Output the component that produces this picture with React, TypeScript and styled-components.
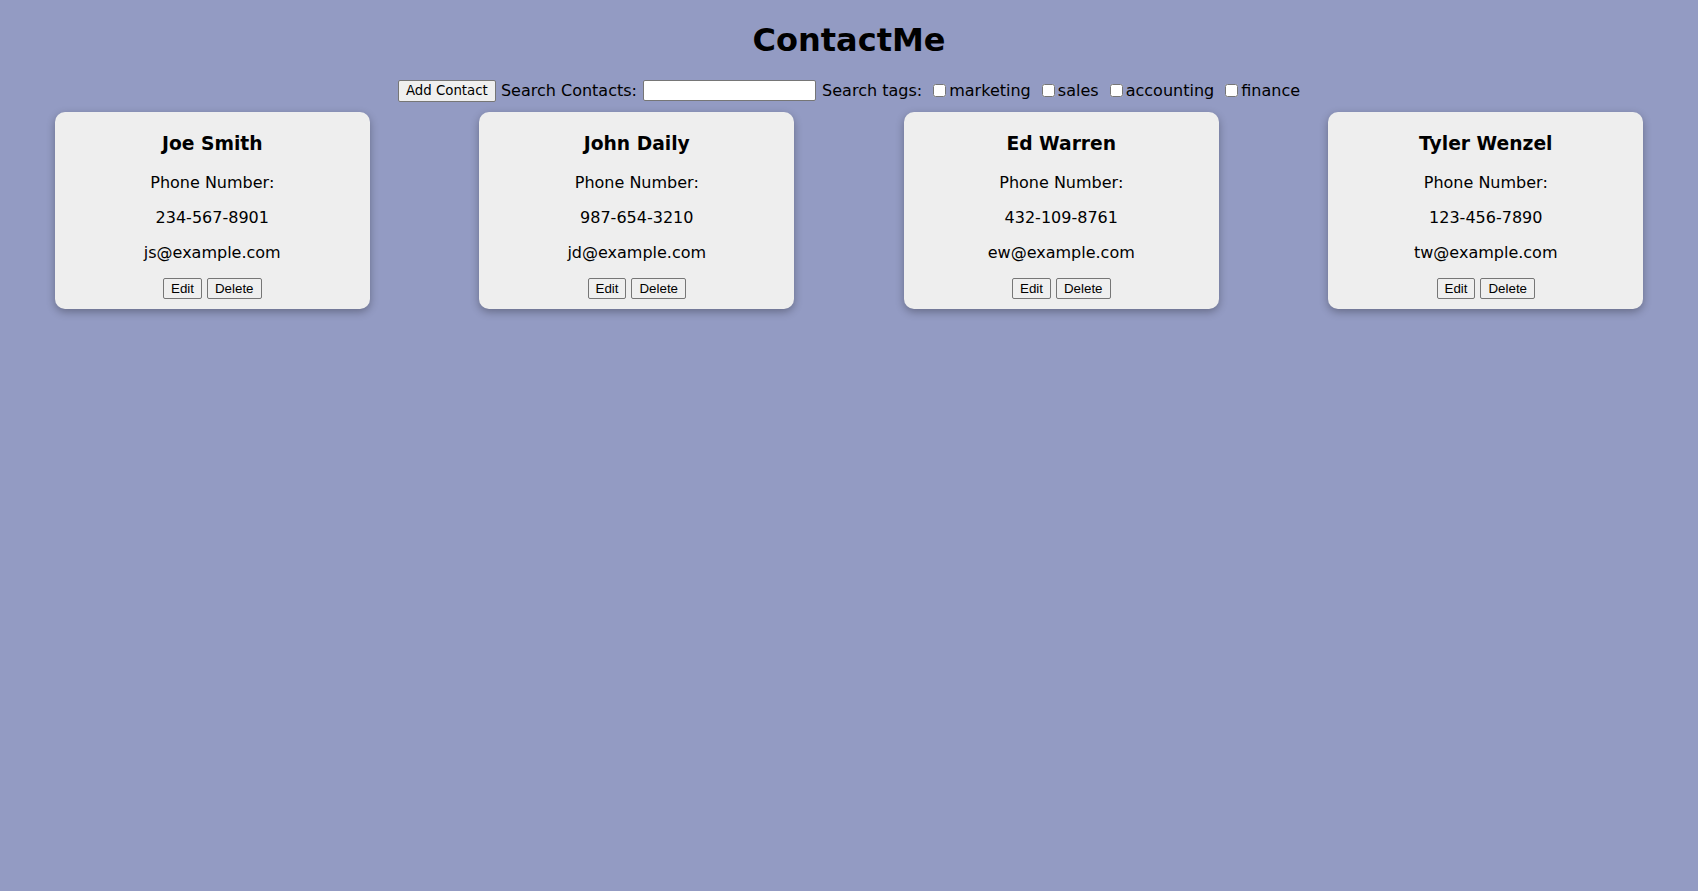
import React from "react";
import styled, { createGlobalStyle } from "styled-components";

const GlobalStyle = createGlobalStyle`
  html, body {
    margin: 0;
    padding: 0;
    background: #939bc3;
  }
  body {
    font-family: "DejaVu Sans", Verdana, sans-serif;
    font-size: 16px;
    color: #000;
  }
`;

const Page = styled.div`
  display: flex;
  flex-direction: column;
  min-height: 891px;
`;

const Title = styled.h1`
  margin: 21px 0 20.5px;
  font-size: 32px;
  font-weight: bold;
  text-align: center;
  line-height: normal;
`;

const Toolbar = styled.div`
  text-align: center;
  line-height: 22px;
  height: 22px;
`;

const AddButton = styled.button`
  font-family: "DejaVu Sans", Verdana, sans-serif;
  font-size: 13.33px;
  height: 22px;
  padding: 1px 7px;
  background: #efefef;
  border: 1px solid #767676;
  border-radius: 2px;
  color: #000;
  vertical-align: top;
  margin: 0;
`;

const SearchInput = styled.input`
  width: 173px;
  height: 21px;
  box-sizing: border-box;
  padding: 1px 2px;
  border: 1px solid #767676;
  border-radius: 2px;
  background: #fff;
  vertical-align: top;
  margin: 0 1px;
`;

const TagLabel = styled.label`
  margin-left: 2px;
`;

const TagBox = styled.input`
  width: 13px;
  height: 13px;
  margin: 0 3px 0 4px;
  vertical-align: -1px;
`;

const CardRow = styled.div`
  display: flex;
  justify-content: space-around;
  align-items: flex-start;
  margin-top: 10px;
`;

const Card = styled.div`
  width: 315px;
  box-sizing: border-box;
  background: #eeeeee;
  border-radius: 10px;
  box-shadow: 0 3px 8px rgba(0, 0, 0, 0.3);
  padding: 3px 0 10px;
  text-align: center;
`;

const Name = styled.h3`
  margin: 18.72px 0;
  font-size: 18.72px;
  font-weight: bold;
`;

const Line = styled.p`
  margin: 16px 0;
`;

const Actions = styled.div`
  display: flex;
  justify-content: center;
  gap: 5px;
`;

const SmallButton = styled.button`
  font-family: "Liberation Sans", Arial, sans-serif;
  font-size: 13.33px;
  height: 21px;
  padding: 1px 7px;
  background: #efefef;
  border: 1px solid #767676;
  border-radius: 2px;
  color: #000;
  margin: 0;
`;

const contacts = [
  { name: "Joe Smith", phone: "234-567-8901", email: "js@example.com" },
  { name: "John Daily", phone: "987-654-3210", email: "jd@example.com" },
  { name: "Ed Warren", phone: "432-109-8761", email: "ew@example.com" },
  { name: "Tyler Wenzel", phone: "123-456-7890", email: "tw@example.com" },
];

const tags = ["marketing", "sales", "accounting", "finance"];

export default function App() {
  return (
    <>
      <GlobalStyle />
      <Page>
        <Title>ContactMe</Title>
        <Toolbar>
          <AddButton>Add Contact</AddButton> Search Contacts: <SearchInput type="text" /> Search tags:
          {tags.map((t) => (
            <TagLabel key={t}>
              {" "}
              <TagBox type="checkbox" />
              {t}
            </TagLabel>
          ))}
        </Toolbar>
        <CardRow>
          {contacts.map((c) => (
            <Card key={c.name}>
              <Name>{c.name}</Name>
              <Line>Phone Number:</Line>
              <Line>{c.phone}</Line>
              <Line>{c.email}</Line>
              <Actions>
                <SmallButton>Edit</SmallButton>
                <SmallButton>Delete</SmallButton>
              </Actions>
            </Card>
          ))}
        </CardRow>
      </Page>
    </>
  );
}
